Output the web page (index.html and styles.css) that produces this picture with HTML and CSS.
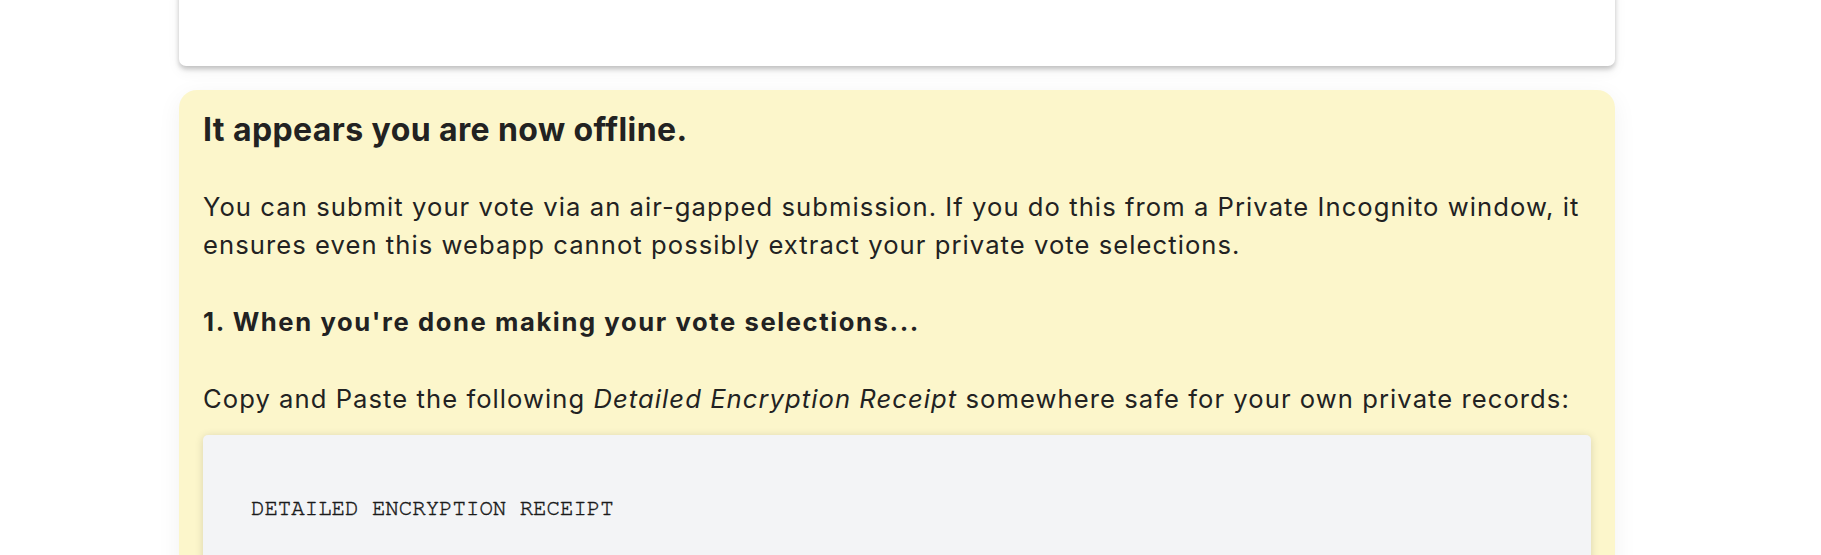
FILE: index.html
```html
<!DOCTYPE html>
<html lang="en">
<head>
<meta charset="utf-8">
<title>Offline submission</title>
<link rel="stylesheet" href="styles.css">
</head>
<body>
<main class="page">
  <div class="card top-card"></div>
  <section class="card offline-card">
    <h2 class="offline-title">It appears you are now offline.</h2>
    <p class="text">You can submit your vote via an air-gapped submission. If you do this from a Private Incognito window, it ensures even this webapp cannot possibly extract your private vote selections.</p>
    <p class="text step">1. When you're done making your vote selections...</p>
    <p class="text">Copy and Paste the following <em>Detailed Encryption Receipt</em> somewhere safe for your own private records:</p>
    <pre class="receipt">DETAILED ENCRYPTION RECEIPT

</pre>
  </section>
</main>
</body>
</html>
```
FILE: styles.css
```css
html, body {
  margin: 0;
  padding: 0;
  height: 555px;
  overflow: hidden;
  background: #ffffff;
}

body {
  font-family: Inter, "Noto Sans", "Liberation Sans", sans-serif;
  color: #222222;
}

.page {
  display: flex;
  flex-direction: column;
  gap: 24px;
  width: 1436px;
  margin-left: 179px;
}

.card {
  box-sizing: border-box;
}

.top-card {
  margin-top: -20px;
  height: 86px;
  background: #ffffff;
  border-radius: 7px;
  box-shadow: 0 3px 5px rgba(0, 0, 0, 0.22), 0 6px 14px rgba(0, 0, 0, 0.05);
}

.offline-card {
  background: #fcf6cb;
  border-radius: 18px;
  padding: 21px 24px 0 24px;
  height: 520px;
  box-shadow: 0 6px 24px rgba(0, 0, 0, 0.06);
}

.offline-title {
  margin: 0;
  font-size: 32px;
  line-height: 38px;
  font-weight: 700;
  letter-spacing: 0.4px;
}

.text {
  margin: 38.5px 0 0 0;
  font-size: 25.6px;
  line-height: 38.4px;
  letter-spacing: 1.06px;
}

.text + .text {
  margin-top: 38.4px;
}

.step {
  font-weight: 700;
  letter-spacing: 1.6px;
}

.receipt {
  margin: 17px 0 0 0;
  padding: 57.5px 48px 0 48px;
  height: 200px;
  background: #f3f4f6;
  border-radius: 5px;
  box-shadow: 0 1px 8px rgba(0, 0, 0, 0.14);
  font-family: "Nimbus Mono PS", "Nimbus Mono L", FreeMono, "Courier New", "Liberation Mono", monospace;
  font-size: 22.4px;
  line-height: 33.6px;
  color: #1a1a1a;
  -webkit-text-stroke: 0.45px #1a1a1a;
}
```
